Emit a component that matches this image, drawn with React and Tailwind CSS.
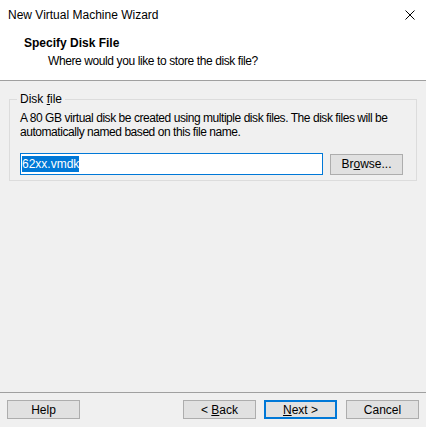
export default function App() {
  const font = { fontFamily: '"Liberation Sans", Arial, sans-serif' };
  return (
    <div className="w-[426px] h-[427px] bg-[#f0f0f0] flex flex-col text-[12px] text-black overflow-hidden" style={font}>
      {/* Title bar + header */}
      <div className="bg-white h-[80px] flex flex-col">
        <div className="h-[30px] flex items-center justify-between pl-[8px] pr-[10px]">
          <span className="leading-none">New Virtual Machine Wizard</span>
          <svg width="10" height="10" viewBox="0 0 10 10" className="mr-[1px]">
            <path d="M0.5 0.5 L9.5 9.5 M9.5 0.5 L0.5 9.5" stroke="#000" strokeWidth="1" />
          </svg>
        </div>
        <div className="pl-[24px] pt-[5px]">
          <div className="font-bold leading-[16px]">Specify Disk File</div>
          <div className="pl-[24px] leading-[16px] mt-[2px] tracking-[-0.4px]">Where would you like to store the disk file?</div>
        </div>
      </div>
      <div className="h-px bg-[#a0a0a0]" />

      {/* Body */}
      <div className="flex-1 px-[9px] pt-[11px]">
        <fieldset className="border border-[#dcdcdc] h-[89px] px-[10px] pt-[0px] m-0">
          <legend className="px-[3px] ml-[-3px] leading-[14px]">
            Disk <span className="underline">f</span>ile
          </legend>
          <p className="leading-[14px] mt-[5px] whitespace-nowrap tracking-[-0.45px]">
            A 80 GB virtual disk be created using multiple disk files. The disk files will be
            <br />
            automatically named based on this file name.
          </p>
          <div className="flex items-center mt-[14px] gap-[7px]">
            <div className="w-[303px] h-[22px] bg-white border border-[#0078d7] flex items-center px-[1px]">
              <span className="bg-[#0078d7] text-white leading-[16px]">62xx.vmdk</span>
            </div>
            <button className="w-[73px] h-[21px] bg-[#e1e1e1] border border-[#adadad] leading-none">
              Br<span className="underline">o</span>wse...
            </button>
          </div>
        </fieldset>
      </div>

      <div className="h-px bg-[#a0a0a0]" />
      <div className="h-[34px] flex items-center px-[7px] pb-[1px]">
        <button className="w-[73px] h-[19px] bg-[#e1e1e1] border border-[#adadad] leading-none">Help</button>
        <div className="flex-1" />
        <button className="w-[73px] h-[19px] bg-[#e1e1e1] border border-[#adadad] leading-none">
          &lt; <span className="underline">B</span>ack
        </button>
        <button className="w-[73px] h-[19px] ml-[8px] bg-[#e1e1e1] border-2 border-[#0078d7] leading-none">
          <span className="underline">N</span>ext &gt;
        </button>
        <button className="w-[73px] h-[19px] ml-[9px] bg-[#e1e1e1] border border-[#adadad] leading-none">Cancel</button>
      </div>
    </div>
  );
}
